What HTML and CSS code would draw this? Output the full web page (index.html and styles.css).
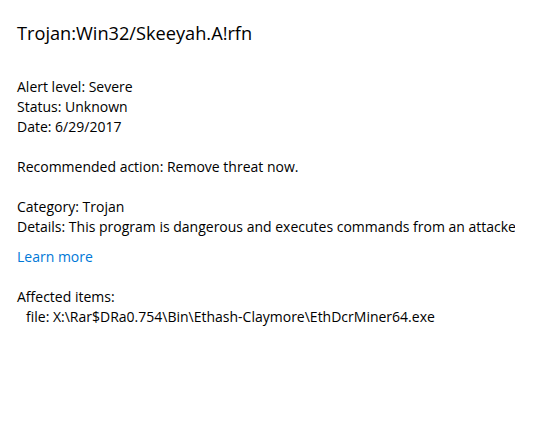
FILE: index.html
```html
<!DOCTYPE html>
<html>
<head>
<meta charset="utf-8">
<link rel="stylesheet" href="styles.css">
</head>
<body>
<div class="panel">
  <h1 class="title">Trojan:Win32/Skeeyah.A!rfn</h1>
  <div class="group first">
    <div class="row">Alert level: Severe</div>
    <div class="row">Status: Unknown</div>
    <div class="row">Date: 6/29/2017</div>
  </div>
  <div class="group">
    <div class="row">Recommended action: Remove threat now.</div>
  </div>
  <div class="group">
    <div class="row">Category: Trojan</div>
    <div class="row clip">Details: This program is dangerous and executes commands from an attacker.</div>
  </div>
  <a class="link" href="#">Learn more</a>
  <div class="group">
    <div class="row">Affected items:</div>
    <div class="row indent">file: X:\Rar$DRa0.754\Bin\Ethash-Claymore\EthDcrMiner64.exe</div>
  </div>
</div>
</body>
</html>
```
FILE: styles.css
```css
html, body {
  margin: 0;
  background: #ffffff;
}
.panel {
  width: 498px;
  padding: 17px 0 0 17px;
  font-family: "Open Sans", "Noto Sans", sans-serif;
  color: #000000;
  font-size: 14px;
}
.title {
  margin: 0;
  font-size: 18.2px;
  font-weight: 400;
  line-height: 32px;
}
.group {
  margin-top: 20px;
}
.group.first {
  margin-top: 28px;
}
.row {
  line-height: 20px;
  white-space: nowrap;
}
.clip {
  overflow: hidden;
}
.link {
  display: block;
  margin-top: 10px;
  line-height: 20px;
  color: #0078d7;
  text-decoration: none;
}
.indent {
  padding-left: 9px;
}
```
